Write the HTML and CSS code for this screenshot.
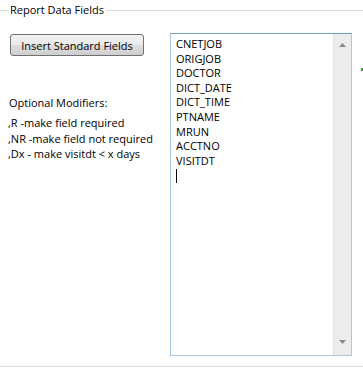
FILE: index.html
```html
<!DOCTYPE html>
<html>
<head>
<meta charset="utf-8">
<link rel="stylesheet" href="styles.css">
</head>
<body>
<fieldset class="group">
  <legend class="group-title">Report Data Fields</legend>
  <div class="content">
    <div class="left">
      <button class="btn">Insert Standard Fields</button>
      <div class="mods">
        <div class="mods-title">Optional Modifiers:</div>
        <div class="mod">,R -make field required</div>
        <div class="mod">,NR -make field not required</div>
        <div class="mod">,Dx - make visitdt &lt; x days</div>
      </div>
    </div>
    <div class="textbox">
      <div class="lines">
        <div class="line">CNETJOB</div>
        <div class="line">ORIGJOB</div>
        <div class="line">DOCTOR</div>
        <div class="line">DICT_DATE</div>
        <div class="line">DICT_TIME</div>
        <div class="line">PTNAME</div>
        <div class="line">MRUN</div>
        <div class="line">ACCTNO</div>
        <div class="line">VISITDT</div>
        <div class="line"><span class="caret"></span></div>
      </div>
      <div class="scrollbar">
        <svg class="arrow" width="7" height="4" viewBox="0 0 7 4"><path d="M3.5 0 L7 4 L0 4 Z" fill="#8a8a8a"/></svg>
        <svg class="arrow" width="7" height="4" viewBox="0 0 7 4"><path d="M0 0 L7 0 L3.5 4 Z" fill="#8a8a8a"/></svg>
      </div>
    </div>
  </div>
</fieldset>
<span class="green-mark"></span>
</body>
</html>
```
FILE: styles.css
```css
html, body {
  margin: 0;
  padding: 0;
  background: #ffffff;
  width: 363px;
  height: 369px;
  overflow: hidden;
  position: relative;
  font-family: "Open Sans", "Noto Sans", sans-serif;
  font-size: 11px;
  color: #000;
}
.group {
  margin: 2px 0 0 0;
  padding: 0;
  width: 380px;
  height: 365px;
  box-sizing: border-box;
  border: 1px solid #d5dfe5;
  border-left: none;
  border-right: none;
}
.group-title {
  margin-left: 8px;
  padding: 0 2px;
  line-height: 16px;
  height: 16px;
}
.content {
  display: flex;
  padding-top: 15px;
}
.left {
  width: 170px;
  flex: none;
}
.btn {
  margin: 1px 0 0 10px;
  width: 134px;
  height: 22px;
  border: 1px solid #707070;
  border-radius: 3px;
  background: linear-gradient(#f2f2f2 0%, #ebebeb 50%, #dddddd 51%, #cfcfcf 100%);
  font-family: inherit;
  font-size: 11px;
  color: #000;
  padding: 0;
}
.mods {
  margin: 39px 0 0 8px;
}
.mods-title {
  line-height: 16px;
  margin-bottom: 4px;
  padding-left: 1px;
}
.mod {
  line-height: 15.5px;
}
.textbox {
  width: 182px;
  height: 323px;
  box-sizing: border-box;
  border: 1px solid #abc8e2;
  border-top-color: #6e9dc8;
  display: flex;
  background: #fff;
}
.lines {
  flex: 1;
  padding: 3px 0 0 5px;
}
.line {
  height: 14.6px;
  line-height: 14.6px;
  white-space: nowrap;
}
.caret {
  display: inline-block;
  width: 1px;
  height: 14px;
  background: #000;
  vertical-align: middle;
}
.scrollbar {
  width: 17px;
  flex: none;
  background: #ececec;
  border-left: 1px solid #e2e2e2;
  display: flex;
  flex-direction: column;
  justify-content: space-between;
  align-items: center;
  padding: 9px 0 11px;
}
.arrow {
  display: block;
}
.green-mark {
  position: absolute;
  left: 361px;
  top: 68px;
  width: 2px;
  height: 3px;
  background: #3aa03a;
}
```
